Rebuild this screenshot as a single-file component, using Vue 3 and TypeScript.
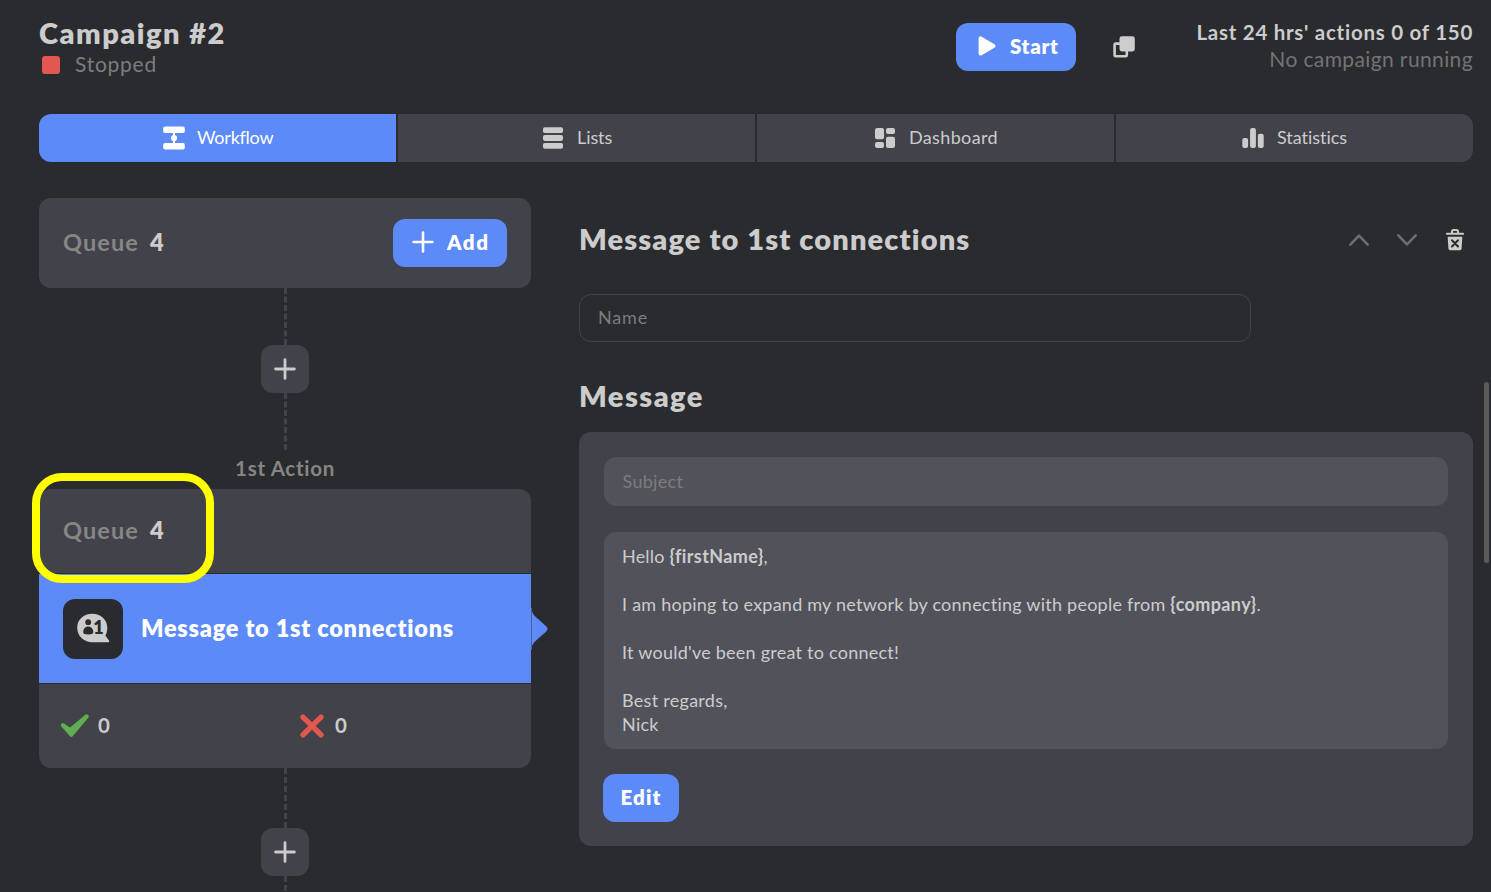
<script setup lang="ts">
import { ref } from 'vue'

type TabId = 'workflow' | 'lists' | 'dashboard' | 'statistics'

const tabs: { id: TabId; label: string }[] = [
  { id: 'workflow', label: 'Workflow' },
  { id: 'lists', label: 'Lists' },
  { id: 'dashboard', label: 'Dashboard' },
  { id: 'statistics', label: 'Statistics' },
]
const activeTab = ref<TabId>('workflow')
const queueCount = ref(4)
const succeeded = ref(0)
const failed = ref(0)
const name = ref('')
const subject = ref('')
</script>

<template>
  <div class="app">
    <header class="header">
      <div class="campaign">
        <h1 class="title">Campaign #2</h1>
        <div class="status"><i class="stop-mark"></i><span>Stopped</span></div>
      </div>
      <button class="btn start">
        <svg class="play" width="18" height="20" viewBox="0 0 18 20"><path d="M2.6 2.4v15.2L15.4 10z" fill="#fff" stroke="#fff" stroke-width="4" stroke-linejoin="round" /></svg>
        <span>Start</span>
      </button>
      <svg class="copy" width="22" height="22" viewBox="0 0 22 22">
        <rect x="1.6" y="7.6" width="12.2" height="12.6" rx="1" fill="none" stroke="#ccc" stroke-width="2.6" />
        <rect x="6.5" y="0.3" width="15.3" height="15.2" rx="2.4" fill="#ccc" />
      </svg>
      <div class="usage">
        <div class="usage-main">Last 24 hrs' actions 0 of 150</div>
        <div class="usage-sub">No campaign running</div>
      </div>
    </header>

    <nav class="tabs">
      <button v-for="tab in tabs" :key="tab.id" class="tab" :class="[tab.id, { active: tab.id === activeTab }]" @click="activeTab = tab.id">
        <svg width="24" height="24" viewBox="0 0 24 24" fill="currentColor">
          <template v-if="tab.id === 'workflow'">
            <rect x="1.2" y="0.6" width="21.6" height="6.4" rx="1.8" />
            <rect x="1.2" y="17.1" width="21.6" height="6.4" rx="1.8" />
            <rect x="11" y="6" width="2" height="12" />
            <circle cx="12" cy="12" r="3.1" />
          </template>
          <template v-else-if="tab.id === 'lists'">
            <rect x="2" y="1.2" width="20" height="5.8" rx="1.8" />
            <rect x="2" y="9.1" width="20" height="5.8" rx="1.8" />
            <rect x="2" y="16.9" width="20" height="5.8" rx="1.8" />
          </template>
          <template v-else-if="tab.id === 'dashboard'">
            <rect x="2" y="2" width="9" height="11.2" rx="2" />
            <rect x="2" y="16" width="9" height="6" rx="2" />
            <rect x="13" y="2" width="9" height="6" rx="2" />
            <rect x="13" y="10.8" width="9" height="11.2" rx="2" />
          </template>
          <template v-else>
            <rect x="1.3" y="12" width="5.8" height="10" rx="2" />
            <rect x="9.1" y="2" width="5.8" height="20" rx="2" />
            <rect x="16.9" y="7.8" width="5.8" height="14.2" rx="2" />
          </template>
        </svg>
        <span>{{ tab.label }}</span>
      </button>
    </nav>

    <main class="main">
      <section class="flow">
        <div class="card queue-card">
          <span class="queue-label">Queue</span><span class="queue-count">{{ queueCount }}</span>
          <button class="btn add">
            <svg width="22" height="22" viewBox="0 0 22 22"><path d="M11 1.6v18.8M1.6 11h18.8" stroke="#fff" stroke-width="2.6" stroke-linecap="round" /></svg>
            <span>Add</span>
          </button>
        </div>
        <div class="line"></div>
        <button class="plus">
          <svg width="22" height="22" viewBox="0 0 22 22"><path d="M11 1.6v18.8M1.6 11h18.8" stroke="#ccc" stroke-width="2.8" stroke-linecap="round" /></svg>
        </button>
        <div class="line"></div>
        <div class="step">1st Action</div>

        <div class="action">
          <div class="action-queue">
            <span class="queue-label">Queue</span><span class="queue-count">{{ queueCount }}</span>
            <div class="highlight"></div>
          </div>
          <div class="action-body">
            <div class="action-icon">
              <svg width="34" height="30" viewBox="0 0 34 30">
                <path d="M16.2 0.8C7.8 0.8 1.2 6.6 1.2 14.7S7.8 29.2 16.2 29.2H32.4C33.4 29.2 33.6 28.2 32.9 27.5L29.4 22.4C30.8 20.1 31.3 17.6 31.3 14.7 31.3 6.6 24.6 0.8 16.2 0.8z" fill="#ccc" />
                <circle cx="12.2" cy="9.2" r="2.9" fill="#2a2b2f" />
                <path d="M7.2 19.1C7.2 15.7 9.2 13.4 12.2 13.4S17.3 15.7 17.3 19.1C17.3 20.9 15.4 21.5 12.2 21.5S7.2 20.9 7.2 19.1z" fill="#2a2b2f" />
                <text x="17.3" y="20.8" class="degree">1</text>
              </svg>
            </div>
            <span class="action-name">Message to 1st connections</span>
            <svg class="pointer" width="17" height="44" viewBox="0 0 17 44">
              <path d="M0.5 1C0.7 6 3.2 8.6 6.2 11.2L15.2 19.2Q17.8 21.8 15.2 24.4L6.2 32.4C3.2 35 0.7 37.6 0.5 42.6z" fill="#5c8af7" />
              <path d="M0.5 1v41.6" stroke="#46649f" />
            </svg>
          </div>
          <div class="action-stats">
            <div class="stat">
              <svg class="check" width="30" height="24" viewBox="0 0 30 24"><path d="M3 11.2L10.3 16.2 26.6 2.4 11.3 20.7z" fill="#5fae50" stroke="#5fae50" stroke-width="4.2" stroke-linejoin="round" /></svg>
              <span>{{ succeeded }}</span>
            </div>
            <div class="stat">
              <svg class="cross" width="24" height="24" viewBox="0 0 24 24"><path d="M3 3.1l18 17.8M21 3.1L3 20.9" stroke="#e2574f" stroke-width="5.4" stroke-linecap="round" /></svg>
              <span>{{ failed }}</span>
            </div>
          </div>
        </div>
        <div class="line long"></div>
        <button class="plus">
          <svg width="22" height="22" viewBox="0 0 22 22"><path d="M11 1.6v18.8M1.6 11h18.8" stroke="#ccc" stroke-width="2.8" stroke-linecap="round" /></svg>
        </button>
        <div class="line long"></div>
      </section>

      <section class="detail">
        <div class="detail-head">
          <h2 class="heading">Message to 1st connections</h2>
          <svg width="22" height="22" viewBox="0 0 22 22"><path d="M2.3 15.6L11 6.6l8.7 9" fill="none" stroke="#6c6c70" stroke-width="2.7" stroke-linecap="round" stroke-linejoin="round" /></svg>
          <svg width="22" height="22" viewBox="0 0 22 22"><path d="M2.3 6.4L11 15.4l8.7-9" fill="none" stroke="#6c6c70" stroke-width="2.7" stroke-linecap="round" stroke-linejoin="round" /></svg>
          <svg width="22" height="22" viewBox="0 0 22 22">
            <path d="M2.9 4.7h16.2M8 4.4V2.6Q8 1 9.6 1h2.8Q14 1 14 2.6v1.8" fill="none" stroke="#ccc" stroke-width="2" stroke-linecap="round" />
            <path d="M3.7 7.7h14.6l-.7 11.9q-.1 1.7-1.8 1.7H6.2q-1.7 0-1.8-1.7z" fill="#ccc" />
            <path d="M8 11.3l6 6.2M14 11.3l-6 6.2" stroke="#2a2b2f" stroke-width="2" stroke-linecap="round" />
          </svg>
        </div>
        <input v-model="name" class="input name" placeholder="Name" />
        <h2 class="heading sub">Message</h2>
        <div class="panel">
          <input v-model="subject" class="input subject" placeholder="Subject" />
          <div class="body">
            <p class="l1">Hello <b>{firstName}</b>,</p>
            <p class="l2">I am hoping to expand my network by connecting with people from <b>{company}</b>.</p>
            <p class="l3">It would've been great to connect!</p>
            <p class="l4">Best regards,<br />Nick</p>
          </div>
          <button class="btn edit">Edit</button>
        </div>
      </section>
    </main>
    <div class="scrollbar"></div>
  </div>
</template>

<style>
html,
body {
  margin: 0;
  background: #2a2b2f;
  overflow: hidden;
}
</style>

<style scoped>
* {
  box-sizing: border-box;
}
.app {
  position: relative;
  width: 1491px;
  height: 892px;
  padding: 17px 18px 0 39px;
  overflow: hidden;
  background: #2a2b2f;
  color: #ccc;
  font-family: Lato, 'Open Sans', sans-serif;
  font-variant-ligatures: none;
}
button {
  border: 0;
  padding: 0;
  margin: 0;
  font-family: inherit;
  color: inherit;
  white-space: nowrap;
}
svg {
  display: block;
  flex: none;
}
h1,
h2,
p {
  margin: 0;
}
.header {
  display: flex;
  height: 97px;
  align-items: flex-start;
}
.campaign {
  width: 917px;
}
.title,
.heading {
  font-size: 29px;
  line-height: 32px;
  font-weight: 800;
  letter-spacing: 1.48px;
}
.status {
  display: flex;
  align-items: center;
  height: 30px;
  font-size: 21px;
  line-height: 30px;
  letter-spacing: 0.75px;
  color: #7c7c7e;
}
.stop-mark {
  width: 18px;
  height: 18px;
  margin: 2px 15px 0 3px;
  border-radius: 3px;
  background: #e2574f;
}
.btn {
  display: flex;
  align-items: center;
  height: 48px;
  border-radius: 12px;
  background: #5c8af7;
  color: #fff;
  font-size: 20.5px;
  line-height: 46px;
  font-weight: 800;
}
.btn span {
  height: 48px;
}
.start {
  width: 120px;
  margin-top: 6px;
  padding-left: 22px;
  line-height: 46px;
  letter-spacing: 0.7px;
}
.play {
  margin: -2px 14px 0 0;
}
.copy {
  margin: 19px 0 0 37px;
}
.usage {
  margin-left: auto;
  text-align: right;
  white-space: nowrap;
}
.usage-main {
  height: 28px;
  font-size: 20.5px;
  line-height: 30px;
  font-weight: 700;
  letter-spacing: 0.73px;
}
.usage-sub {
  font-size: 21px;
  line-height: 28px;
  letter-spacing: 0.38px;
  color: #737376;
}
.tabs {
  display: grid;
  grid-template-columns: repeat(4, 357px);
  gap: 2px;
  height: 48px;
  border-radius: 12px;
  overflow: hidden;
}
.tab {
  display: flex;
  align-items: center;
  background: #42424a;
  font-size: 18px;
  line-height: 46px;
}
.tab span {
  height: 48px;
}
.tab.active {
  background: #5c8af7;
  color: #fff;
}
.tab.workflow {
  padding-left: 123px;
  gap: 11px;
  letter-spacing: -0.25px;
}
.tab.lists {
  padding-left: 143px;
  gap: 12px;
  letter-spacing: -0.08px;
}
.tab.dashboard {
  padding-left: 116px;
  gap: 12px;
  letter-spacing: 0.35px;
}
.tab.statistics {
  padding-left: 125px;
  gap: 12px;
  letter-spacing: -0.03px;
}
.main {
  display: grid;
  grid-template-columns: 492px 894px;
  column-gap: 48px;
  padding-top: 36px;
}
.card {
  display: flex;
  align-items: center;
  height: 90px;
  padding: 0 24px;
  border-radius: 12px;
  background: #42424a;
}
.queue-label,
.queue-count {
  padding-bottom: 2px;
  font-size: 23.5px;
  font-weight: 700;
}
.queue-label {
  width: 87px;
  color: #868685;
  letter-spacing: 1.1px;
}
.queue-count {
  font-weight: 800;
}
.add {
  width: 114px;
  margin-left: auto;
  padding: 0 0 0 19px;
  gap: 13px;
  letter-spacing: 1.5px;
}
.add svg {
  margin-top: -2px;
}
.line {
  height: 57px;
  margin-left: 245px;
  width: 0;
  border-left: 3px dashed #42424a;
}
.line.long {
  height: 60px;
}
.plus {
  display: flex;
  align-items: center;
  justify-content: center;
  width: 48px;
  height: 48px;
  margin-left: 222px;
  border-radius: 12px;
  background: #42424a;
}
.step {
  height: 39px;
  text-align: center;
  font-size: 20.5px;
  line-height: 37px;
  font-weight: 700;
  letter-spacing: 0.7px;
  color: #868685;
}
.action {
  display: grid;
  grid-template-rows: 84px 109px 84px;
  row-gap: 1px;
}
.action-queue {
  position: relative;
  display: flex;
  align-items: center;
  padding-left: 24px;
  border-radius: 12px 12px 0 0;
  background: #42424a;
}
.highlight {
  position: absolute;
  z-index: 2;
  left: -7px;
  top: -16px;
  width: 182px;
  height: 110px;
  border: 8px solid #ff0;
  border-radius: 30px;
}
.action-body {
  position: relative;
  display: flex;
  align-items: center;
  padding-left: 24px;
  background: #5c8af7;
  color: #fff;
}
.action-icon {
  display: flex;
  width: 60px;
  height: 60px;
  padding: 14px 0 0 13px;
  border-radius: 12px;
  background: #2a2b2f;
}
.degree {
  font: 800 18px Lato, sans-serif;
  fill: #2a2b2f;
}
.action-name {
  margin-left: 18px;
  padding-bottom: 2px;
  font-size: 23.5px;
  font-weight: 800;
  letter-spacing: 0.75px;
}
.pointer {
  position: absolute;
  left: 492px;
  top: 33px;
}
.action-stats {
  display: grid;
  grid-template-columns: 239px 1fr;
  align-items: center;
  padding-left: 21px;
  border-radius: 0 0 12px 12px;
  background: #42424a;
}
.stat {
  display: flex;
  align-items: center;
  font-size: 20.5px;
  font-weight: 700;
}
.stat span {
  padding-bottom: 2px;
}
.check {
  margin-right: 8px;
}
.cross {
  margin: 0 11px 0 1px;
}
.detail-head {
  display: flex;
  align-items: center;
  gap: 26px;
  height: 84px;
  padding-right: 7px;
}
.heading {
  flex: 1;
  padding-bottom: 2px;
  letter-spacing: 1.12px;
}
.input {
  display: block;
  height: 48px;
  padding: 0 18px 2px;
  border: 1px solid #42424a;
  border-radius: 12px;
  outline: none;
  background: transparent;
  color: #ccc;
  font: 18px Lato, 'Open Sans', sans-serif;
}
.input::placeholder {
  opacity: 1;
  color: #7c7c7e;
}
.name {
  width: 672px;
  margin-top: 12px;
  letter-spacing: 0.85px;
}
.heading.sub {
  margin-top: 38px;
  height: 52px;
  line-height: 31px;
  letter-spacing: 1.45px;
}
.panel {
  height: 414px;
  padding: 25px;
  border-radius: 12px;
  background: #42424a;
}
.subject {
  width: 844px;
  height: 49px;
  padding-left: 17.5px;
  border-color: #52525b;
  background: #52525b;
  letter-spacing: 0.3px;
}
.body {
  height: 217px;
  margin-top: 26px;
  padding: 12px 18px;
  border-radius: 12px;
  background: #52525b;
  font-size: 18px;
  line-height: 24px;
  white-space: nowrap;
}
.body p + p {
  margin-top: 24px;
}
.l1 {
  letter-spacing: 0.2px;
}
.l2 {
  letter-spacing: 0.24px;
}
.l3 {
  letter-spacing: 0.24px;
}
.l4 {
  letter-spacing: 0.28px;
}
.body b {
  font-weight: 700;
  letter-spacing: 0.38px;
}
.edit {
  width: 76px;
  margin: 25px 0 0 -1px;
  justify-content: center;
  padding-bottom: 2px;
  letter-spacing: 1.1px;
}
.scrollbar {
  position: absolute;
  left: 1484px;
  top: 382px;
  width: 5px;
  height: 181px;
  border-radius: 3px;
  background: #5b5b5e;
}
</style>
